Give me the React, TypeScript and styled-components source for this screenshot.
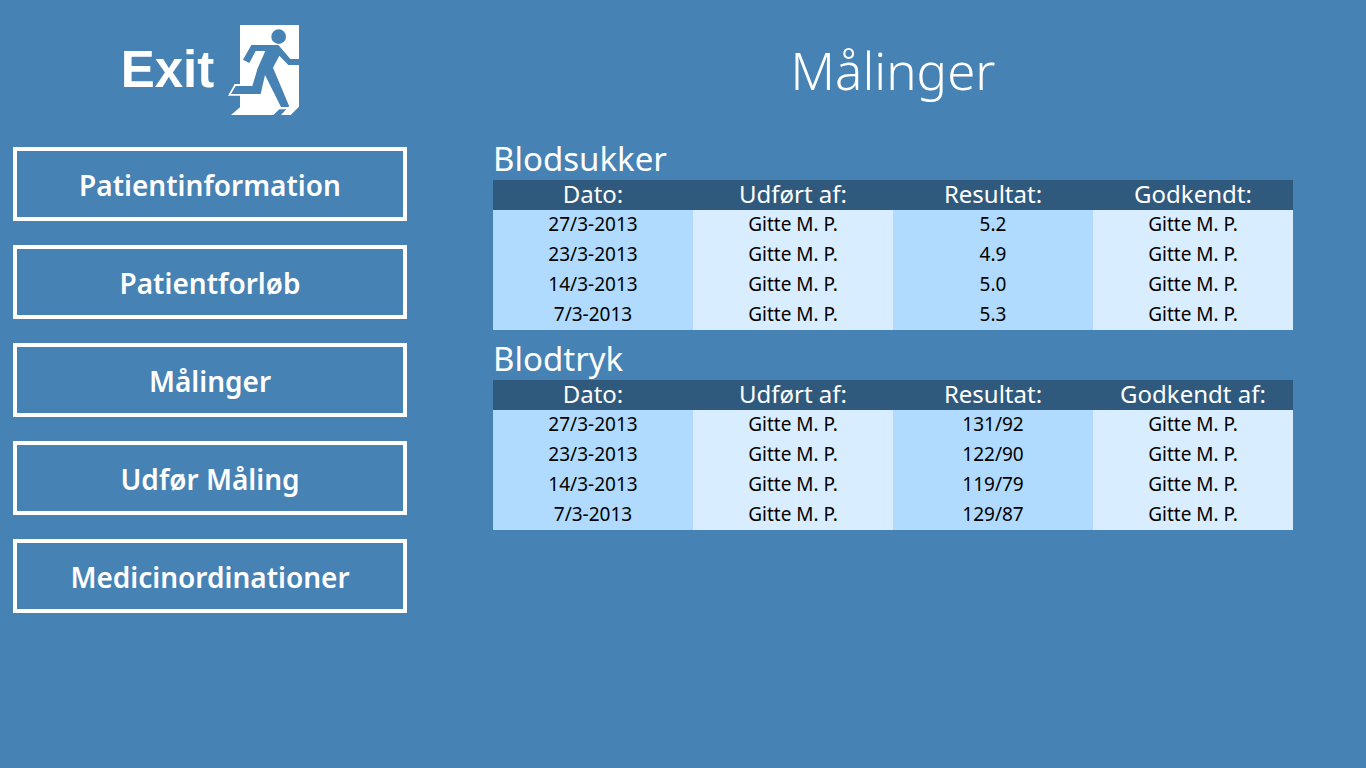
import React from "react";
import styled, { createGlobalStyle } from "styled-components";

const GlobalStyle = createGlobalStyle`
  *, *::before, *::after { box-sizing: border-box; }
  body {
    margin: 0;
    background: #4682b4;
    color: #fff;
    font-family: "Segoe UI", "Noto Sans", "Open Sans", sans-serif;
  }
`;

const Page = styled.div`
  display: grid;
  grid-template-columns: 394px minmax(0, 1fr);
  column-gap: 86px;
  min-height: 100vh;
  padding: 24px 73px 24px 13px;
`;

const Sidebar = styled.aside`
  display: flex;
  flex-direction: column;
  align-items: stretch;
  gap: 32px;
`;

const ExitButton = styled.button`
  display: flex;
  align-self: center;
  align-items: center;
  gap: 14px;
  height: 91px;
  padding: 0;
  border: 0;
  background: none;
  color: inherit;
  font: 700 51px/60px "Liberation Sans", Arial, sans-serif;
  cursor: pointer;
`;

const ExitIcon = styled.svg`
  width: 71px;
  height: 90px;
`;

const Menu = styled.nav`
  display: flex;
  flex-direction: column;
  gap: 24px;
`;

const MenuButton = styled.button`
  height: 74px;
  padding: 2px 12px 0;
  border: 4px solid #fff;
  background: transparent;
  color: inherit;
  font: inherit;
  font-size: 28px;
  font-weight: 600;
  line-height: 40px;
  cursor: pointer;
`;

const Main = styled.main`
  display: flex;
  flex-direction: column;
`;

const Title = styled.h1`
  margin: 0;
  padding-bottom: 24px;
  font-size: 51px;
  font-weight: 300;
  line-height: 92px;
  text-align: center;
`;

const Section = styled.section`
  padding-bottom: 10px;
`;

const SectionTitle = styled.h2`
  margin: 0;
  padding-bottom: 2px;
  font-size: 33px;
  font-weight: 400;
  line-height: 38px;
`;

const Table = styled.table`
  width: 100%;
  table-layout: fixed;
  border-collapse: collapse;
  text-align: center;
`;

const HeadCell = styled.th`
  height: 30px;
  padding: 0 0 2px;
  background: #2f5a7e;
  font-size: 24px;
  font-weight: 400;
  line-height: 28px;
`;

const Cell = styled.td`
  height: 30px;
  padding: 0 0 2px;
  background: #b0dbff;
  color: #000;
  font-size: 19px;
  line-height: 28px;

  &:nth-child(even) {
    background: #d8edff;
  }
`;

const menuItems = [
  "Patientinformation",
  "Patientforløb",
  "Målinger",
  "Udfør Måling",
  "Medicinordinationer",
];

interface Measurements {
  title: string;
  columns: string[];
  rows: string[][];
}

const measurements: Measurements[] = [
  {
    title: "Blodsukker",
    columns: ["Dato:", "Udført af:", "Resultat:", "Godkendt:"],
    rows: [
      ["27/3-2013", "Gitte M. P.", "5.2", "Gitte M. P."],
      ["23/3-2013", "Gitte M. P.", "4.9", "Gitte M. P."],
      ["14/3-2013", "Gitte M. P.", "5.0", "Gitte M. P."],
      ["7/3-2013", "Gitte M. P.", "5.3", "Gitte M. P."],
    ],
  },
  {
    title: "Blodtryk",
    columns: ["Dato:", "Udført af:", "Resultat:", "Godkendt af:"],
    rows: [
      ["27/3-2013", "Gitte M. P.", "131/92", "Gitte M. P."],
      ["23/3-2013", "Gitte M. P.", "122/90", "Gitte M. P."],
      ["14/3-2013", "Gitte M. P.", "119/79", "Gitte M. P."],
      ["7/3-2013", "Gitte M. P.", "129/87", "Gitte M. P."],
    ],
  },
];

function RunningMan() {
  return (
    <ExitIcon viewBox="24 30 213 270" aria-hidden="true">
      <path
        fill="#fff"
        d="M60 30H237V275L212 300H183L199 283H178L160 300H33L60 277V242H24L44 207H60Z"
      />
      <circle cx="176" cy="65" r="22" fill="#4682b4" />
      <path
        fill="#4682b4"
        d="M94 90H175L211 132H237V150H205L178 122L159 158L207 272L206 276H183L135 180L122 237H33L47 213H97L113 160L136 108H107L88 144L69 134Z"
      />
    </ExitIcon>
  );
}

export default function App() {
  return (
    <>
      <GlobalStyle />
      <Page>
        <Sidebar>
          <ExitButton type="button">
            Exit
            <RunningMan />
          </ExitButton>
          <Menu>
            {menuItems.map((item) => (
              <MenuButton key={item} type="button">
                {item}
              </MenuButton>
            ))}
          </Menu>
        </Sidebar>
        <Main>
          <Title>Målinger</Title>
          {measurements.map(({ title, columns, rows }) => (
            <Section key={title}>
              <SectionTitle>{title}</SectionTitle>
              <Table aria-label={title}>
                <thead>
                  <tr>
                    {columns.map((column) => (
                      <HeadCell key={column} scope="col">
                        {column}
                      </HeadCell>
                    ))}
                  </tr>
                </thead>
                <tbody>
                  {rows.map((row) => (
                    <tr key={row[0]}>
                      {row.map((value, index) => (
                        <Cell key={index}>{value}</Cell>
                      ))}
                    </tr>
                  ))}
                </tbody>
              </Table>
            </Section>
          ))}
        </Main>
      </Page>
    </>
  );
}
